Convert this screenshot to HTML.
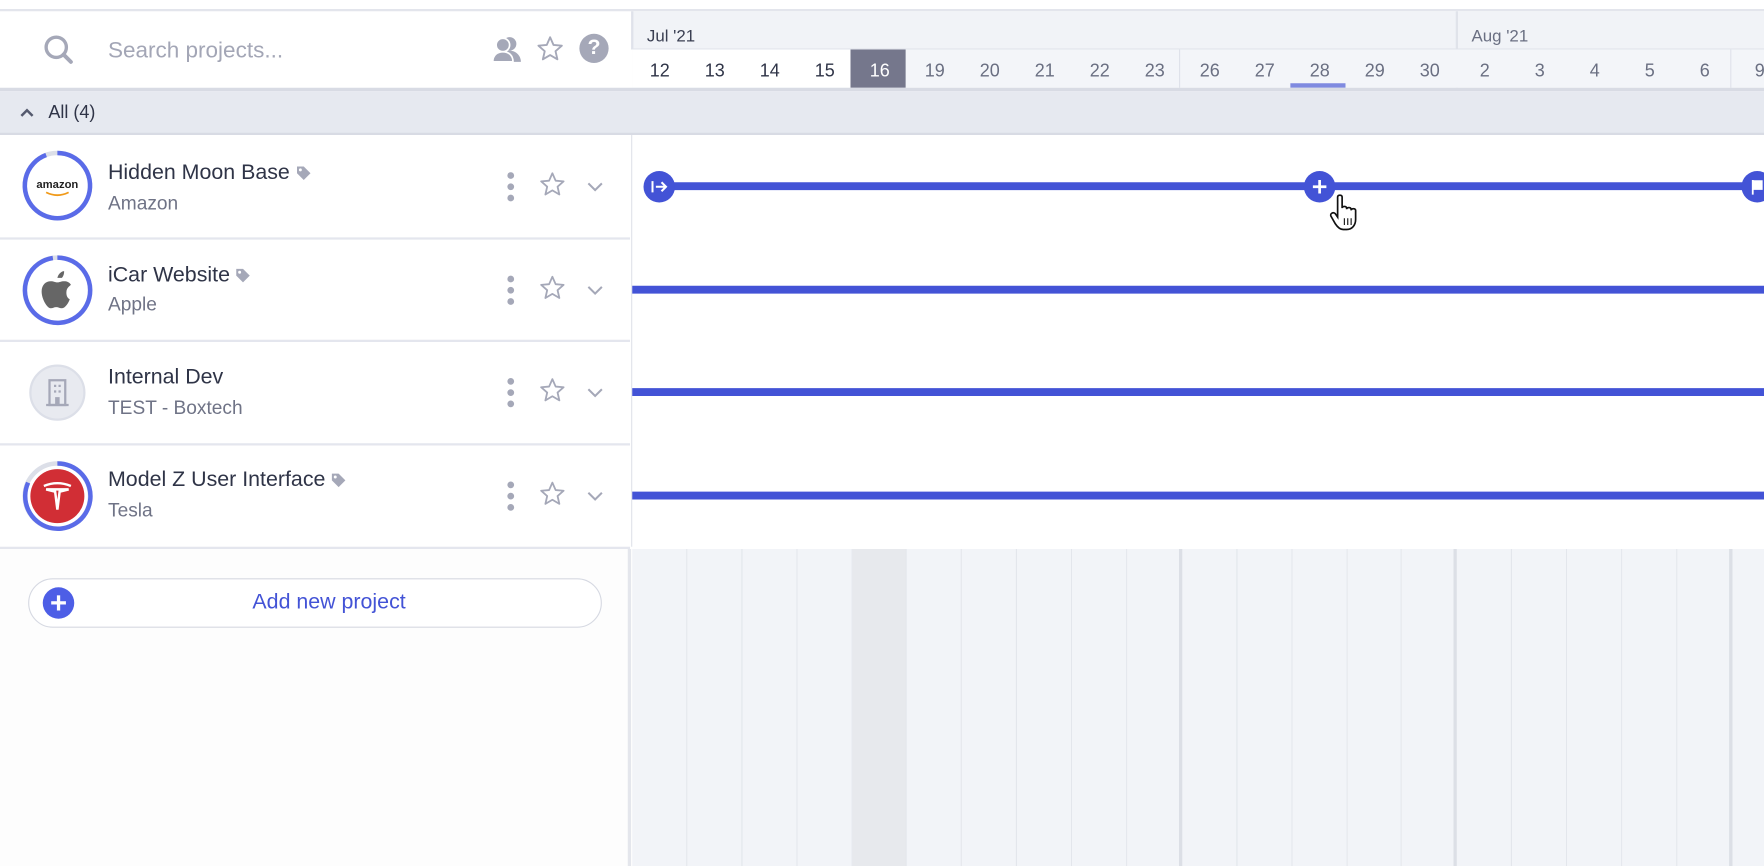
<!DOCTYPE html>
<html><head><meta charset="utf-8"><style>
*{box-sizing:border-box;margin:0;padding:0}
html,body{width:1764px;height:866px;overflow:hidden;background:#fff;font-family:"Liberation Sans",Arial,sans-serif}
#w{position:absolute;left:0;top:0;width:1568px;height:770px;transform:scale(1.125);transform-origin:0 0;background:#fff}
.a{position:absolute}
.days{display:flex}
.days div{width:48.9px;flex:none;text-align:center}
.row{position:absolute;left:0;width:560px;height:92px;border-bottom:2px solid #e4e6ee}
.logo{position:absolute;left:19px;top:13px;width:64px;height:64px;border-radius:50%}
.t1{position:absolute;left:96px;top:23px;font-size:19px;color:#2f3447}
.t2{position:absolute;left:96px;top:51px;font-size:17px;color:#6f7386}
.bar{position:absolute;left:562px;right:0;height:7px;background:#4353d6}
.tag{display:inline-block;vertical-align:middle;margin-left:4px}
</style></head><body><div id="w">
<div class="a" style="left:0;top:8px;width:1568px;height:2px;background:#e3e5ec"></div>
<svg class="a" style="left:38px;top:30px" width="28" height="28" viewBox="0 0 28 28"><circle cx="12" cy="12" r="9" fill="none" stroke="#a5a8b8" stroke-width="3"/><line x1="18.5" y1="18.5" x2="25" y2="25" stroke="#a5a8b8" stroke-width="3.5" stroke-linecap="round"/></svg>
<div class="a" style="left:96px;top:34px;font-size:20px;color:#a3a6b6">Search projects...</div>
<svg class="a" style="left:437px;top:31px" width="28" height="26" viewBox="0 0 28 26"><circle cx="16" cy="8" r="6" fill="#a5a8b8"/><path d="M6 24c0-6 5-10 10-10s10 4 10 10z" fill="#a5a8b8"/><circle cx="10" cy="9" r="6" fill="#a5a8b8" stroke="#fff" stroke-width="1.5"/><path d="M1 24c0-6 4-9 9-9s9 3 9 9z" fill="#a5a8b8" stroke="#fff" stroke-width="1.5"/></svg>
<svg class="a" style="left:476px;top:31px" width="26" height="25" viewBox="0 0 24 24"><path d="M12 2l2.9 6.6 7.1.6-5.4 4.7 1.6 7L12 17.2 5.8 20.9l1.6-7L2 9.2l7.1-.6z" fill="none" stroke="#a5a8b8" stroke-width="1.6" stroke-linejoin="round"/></svg>
<div class="a" style="left:515px;top:30px;width:26px;height:26px;border-radius:50%;background:#a5a8b8;color:#fff;font-weight:bold;font-size:19px;text-align:center;line-height:26px">?</div>
<div class="a" style="left:561px;top:10px;width:1007px;height:34px;background:#f1f3f7;border-bottom:1px solid #e2e5ec;border-left:2px solid #dfe2ea"></div>
<div class="a" style="left:1294px;top:10px;width:2px;height:68px;background:#e0e3ea"></div>
<div class="a" style="left:575px;top:24px;font-size:15px;color:#3a3f52">Jul '21</div>
<div class="a" style="left:1308px;top:24px;font-size:15px;color:#6a6f82">Aug '21</div>
<div class="a" style="left:562px;top:44px;width:1006px;height:34px;background:#f3f5f9"></div>
<div class="a" style="left:562px;top:44px;width:194px;height:34px;background:#fff"></div>
<div class="a" style="left:756px;top:44px;width:49px;height:34px;background:#75778c"></div>
<div class="a" style="left:1048px;top:44px;width:1px;height:34px;background:#dfe2ea"></div>
<div class="a" style="left:1538px;top:44px;width:1px;height:34px;background:#dfe2ea"></div>
<div class="a" style="left:1147px;top:74px;width:49px;height:4px;background:#7f8ae0"></div>
<div class="a days" style="left:562px;top:55px;font-size:16px;color:#6a6f82">
<div style="color:#2f3447">12</div><div style="color:#2f3447">13</div><div style="color:#2f3447">14</div><div style="color:#2f3447">15</div><div style="color:#fff">16</div><div>19</div><div>20</div><div>21</div><div>22</div><div>23</div><div>26</div><div>27</div><div>28</div><div>29</div><div>30</div><div>2</div><div>3</div><div>4</div><div>5</div><div>6</div><div>9</div></div>
<div class="a" style="left:0;top:78px;width:1568px;height:3px;background:#d8dbe4"></div>
<div class="a" style="left:0;top:81px;width:1568px;height:39px;background:#e6e9f0;border-bottom:2px solid #d8dbe4"></div>
<svg class="a" style="left:16px;top:94px" width="16" height="12" viewBox="0 0 16 12"><path d="M3 9l5-5 5 5" fill="none" stroke="#555a6e" stroke-width="2.2"/></svg>
<div class="a" style="left:43px;top:92px;font-size:16px;color:#2f3447">All (4)</div>
<div class="a" style="left:561px;top:120px;width:1px;height:366px;background:#e0e3ea"></div>
<div class="row" style="top:120px;height:93px">
<svg class="logo" viewBox="0 0 64 64"><circle cx="32" cy="32" r="29" fill="#fff" stroke="#dcdfe8" stroke-width="4"/><path d="M32 3A29 29 0 1 1 22 4.8" fill="none" stroke="#5a6be8" stroke-width="4"/><text x="32" y="34" font-size="10" text-anchor="middle" font-family="Liberation Sans" font-weight="bold" fill="#222">amazon</text><path d="M22 38q10 5 20 0" fill="none" stroke="#f09a1a" stroke-width="1.6"/></svg>
<div class="t1">Hidden Moon Base<svg class="tag" width="16" height="16" viewBox="0 0 16 16"><path d="M2 2h6l6 6-6 6-6-6z" fill="#a5a8b8"/><circle cx="5" cy="5" r="1.3" fill="#fff"/></svg></div><div class="t2">Amazon</div>
</div>
<div class="row" style="top:213px;height:91px">
<svg class="logo" viewBox="0 0 64 64"><circle cx="32" cy="32" r="29" fill="#fff" stroke="#dcdfe8" stroke-width="4"/><path d="M32 3A29 29 0 1 1 28 3.3" fill="none" stroke="#5a6be8" stroke-width="4"/><path d="M40 34c0-5 4-6 4-7-2-3-5-3-6-3-3 0-4 1-6 1s-3-1-6-1c-4 0-8 3-8 9 0 7 5 15 8 15 2 0 3-1 5-1s3 1 5 1c3 0 6-5 7-8-2-1-3-3-3-6zM36 21c2-2 2-5 2-6-2 0-5 2-6 6 2 0 3 0 4 0z" fill="#666"/></svg>
<div class="t1" style="top:21px">iCar Website<svg class="tag" width="16" height="16" viewBox="0 0 16 16"><path d="M2 2h6l6 6-6 6-6-6z" fill="#a5a8b8"/><circle cx="5" cy="5" r="1.3" fill="#fff"/></svg></div><div class="t2" style="top:48px">Apple</div>
</div>
<div class="row" style="top:304px">
<svg class="logo" viewBox="0 0 64 64"><circle cx="32" cy="32" r="24" fill="#e8eaf0" stroke="#dcdfe8" stroke-width="2"/><rect x="25" y="21" width="14" height="22" fill="none" stroke="#a5a8b8" stroke-width="2"/><rect x="22" y="42" width="20" height="2" fill="#a5a8b8"/><rect x="29" y="25" width="2" height="2" fill="#a5a8b8"/><rect x="33" y="25" width="2" height="2" fill="#a5a8b8"/><rect x="29" y="30" width="2" height="2" fill="#a5a8b8"/><rect x="33" y="30" width="2" height="2" fill="#a5a8b8"/><rect x="30" y="36" width="4" height="7" fill="#a5a8b8"/></svg>
<div class="t1" style="top:21px">Internal Dev</div><div class="t2" style="top:49px">TEST - Boxtech</div>
</div>
<div class="row" style="top:396px">
<svg class="logo" viewBox="0 0 64 64"><circle cx="32" cy="32" r="29" fill="#fff" stroke="#dcdfe8" stroke-width="4"/><path d="M32 3A29 29 0 1 1 6 20" fill="none" stroke="#5a6be8" stroke-width="4"/><circle cx="32" cy="32" r="24" fill="#d12e35"/><path d="M20 23q12-5 24 0M22 26h20l-8 2-2 16-2-16z" fill="none" stroke="#fff" stroke-width="2.2"/></svg>
<div class="t1" style="top:20px">Model Z User Interface<svg class="tag" width="16" height="16" viewBox="0 0 16 16"><path d="M2 2h6l6 6-6 6-6-6z" fill="#a5a8b8"/><circle cx="5" cy="5" r="1.3" fill="#fff"/></svg></div><div class="t2" style="top:48px">Tesla</div>
</div>
<svg class="a" style="left:440px;top:153px" width="110" height="320" viewBox="0 0 110 320">
<g id="g"><circle cx="14" cy="3" r="3" fill="#a5a8b8"/><circle cx="14" cy="13" r="3" fill="#a5a8b8"/><circle cx="14" cy="23" r="3" fill="#a5a8b8"/><path d="M51 1l2.9 6.6 7.1.6-5.4 4.7 1.6 7L51 16.2 44.8 19.9l1.6-7L41 8.2l7.1-.6z" fill="none" stroke="#a5a8b8" stroke-width="1.6" stroke-linejoin="round"/><path d="M83 10l6 6 6-6" fill="none" stroke="#a5a8b8" stroke-width="1.8"/></g>
<use href="#g" y="92"/><use href="#g" y="183"/><use href="#g" y="275"/>
</svg>
<div class="bar" style="top:162px;left:575px"></div>
<div class="bar" style="top:254px"></div>
<div class="bar" style="top:345px"></div>
<div class="bar" style="top:437px"></div>
<svg class="a" style="left:572px;top:151px" width="30" height="30" viewBox="0 0 30 30"><circle cx="14" cy="15" r="14" fill="#4353d6"/><path d="M8 10v10M11 15h8M16 11l4 4-4 4" fill="none" stroke="#fff" stroke-width="1.8"/></svg>
<svg class="a" style="left:1159px;top:151px" width="30" height="30" viewBox="0 0 30 30"><circle cx="14" cy="15" r="14" fill="#4353d6"/><path d="M14 9v12M8 15h12" stroke="#fff" stroke-width="2.4"/></svg>
<svg class="a" style="left:1547px;top:151px" width="21" height="30" viewBox="0 0 21 30"><circle cx="15" cy="15" r="14" fill="#4353d6"/><path d="M11 9v13M11 10h8v7h-8" fill="#fff" stroke="#fff" stroke-width="1.6"/></svg>
<svg class="a" style="left:1182px;top:172px" width="28" height="34" viewBox="0 0 28 34"><path d="M7 3c0-2 4-2 4 0v10c0-2 4-2 4 0v1c0-2 4-2 4 0v1c0-2 4-2 4 0v8c0 5-3 9-8 9h-3c-3 0-5-2-7-5l-4-7c-1-2 2-4 4-2l2 3z" fill="#fff" stroke="#111" stroke-width="1.5"/><path d="M13 22v6M16 22v6M19 22v6" stroke="#111" stroke-width="1"/></svg>
<div class="a" style="left:0;top:488px;width:558px;height:282px;background:#fdfdfd"></div>
<div class="a" style="left:558px;top:488px;width:3px;height:282px;background:#e4e6ec"></div>
<div class="a days" style="left:562px;top:488px;height:282px">
<div style="border-right:1px solid #e3e6ec;background:#f2f4f8"></div><div style="border-right:1px solid #e3e6ec;background:#f2f4f8"></div><div style="border-right:1px solid #e3e6ec;background:#f2f4f8"></div><div style="border-right:1px solid #e3e6ec;background:#f2f4f8"></div><div style="border-right:1px solid #e3e6ec;background:#e7e9ed"></div><div style="border-right:1px solid #e3e6ec;background:#f2f4f8"></div><div style="border-right:1px solid #e3e6ec;background:#f2f4f8"></div><div style="border-right:1px solid #e3e6ec;background:#f2f4f8"></div><div style="border-right:1px solid #e3e6ec;background:#f2f4f8"></div><div style="border-right:3px solid #dcdfe6;background:#f2f4f8"></div><div style="border-right:1px solid #e3e6ec;background:#f2f4f8"></div><div style="border-right:1px solid #e3e6ec;background:#f2f4f8"></div><div style="border-right:1px solid #e3e6ec;background:#f2f4f8"></div><div style="border-right:1px solid #e3e6ec;background:#f2f4f8"></div><div style="border-right:3px solid #dcdfe6;background:#f2f4f8"></div><div style="border-right:1px solid #e3e6ec;background:#f2f4f8"></div><div style="border-right:1px solid #e3e6ec;background:#f2f4f8"></div><div style="border-right:1px solid #e3e6ec;background:#f2f4f8"></div><div style="border-right:1px solid #e3e6ec;background:#f2f4f8"></div><div style="border-right:3px solid #dcdfe6;background:#f2f4f8"></div><div style="background:#f2f4f8"></div></div>
<div class="a" style="left:25px;top:514px;width:510px;height:44px;border:1.5px solid #d6d9e2;border-radius:22px;background:#fff"></div>
<div class="a" style="left:38px;top:522px;width:28px;height:28px;border-radius:50%;background:#4d5ee6;color:#fff;font-size:26px;font-weight:bold;text-align:center;line-height:28px">+</div>
<div class="a" style="left:25px;top:525px;width:535px;text-align:center;font-size:19px;color:#4353d6">Add new project</div>
</div></body></html>
